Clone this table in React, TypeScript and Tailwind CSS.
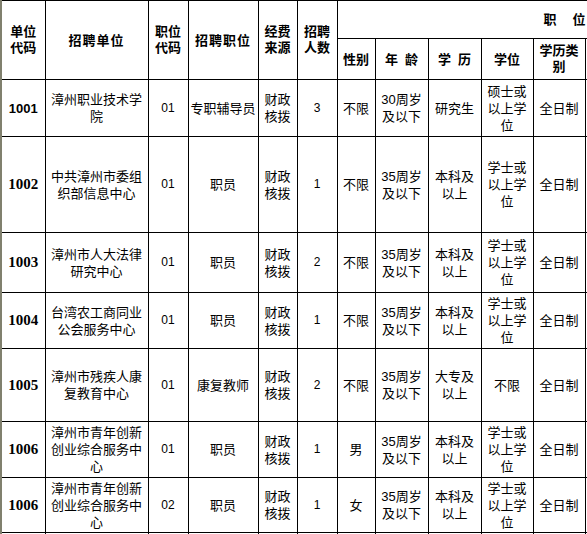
import React from "react";

type Row = {
  code: string;
  unit: string;
  pos: string;
  job: string;
  fund: string;
  num: string;
  sex: string;
  age: string;
  edu: string;
  degree: string;
  kind: string;
  h: string;
  serif: boolean;
};

const rows: Row[] = [
  { code: "1001", unit: "漳州职业技术学院", pos: "01", job: "专职辅导员", fund: "财政核拨", num: "3", sex: "不限", age: "30周岁及以下", edu: "研究生", degree: "硕士或以上学位", kind: "全日制", h: "h-[57px]", serif: false },
  { code: "1002", unit: "中共漳州市委组织部信息中心", pos: "01", job: "职员", fund: "财政核拨", num: "1", sex: "不限", age: "35周岁及以下", edu: "本科及以上", degree: "学士或以上学位", kind: "全日制", h: "h-[96px]", serif: true },
  { code: "1003", unit: "漳州市人大法律研究中心", pos: "01", job: "职员", fund: "财政核拨", num: "2", sex: "不限", age: "35周岁及以下", edu: "本科及以上", degree: "学士或以上学位", kind: "全日制", h: "h-[60px]", serif: true },
  { code: "1004", unit: "台湾农工商同业公会服务中心", pos: "01", job: "职员", fund: "财政核拨", num: "1", sex: "不限", age: "35周岁及以下", edu: "本科及以上", degree: "学士或以上学位", kind: "全日制", h: "h-[56px]", serif: true },
  { code: "1005", unit: "漳州市残疾人康复教育中心", pos: "01", job: "康复教师", fund: "财政核拨", num: "2", sex: "不限", age: "35周岁及以下", edu: "大专及以上", degree: "不限", kind: "全日制", h: "h-[73px]", serif: true },
  { code: "1006", unit: "漳州市青年创新创业综合服务中心", pos: "01", job: "职员", fund: "财政核拨", num: "1", sex: "男", age: "35周岁及以下", edu: "本科及以上", degree: "学士或以上学位", kind: "全日制", h: "h-[56px]", serif: true },
  { code: "1006", unit: "漳州市青年创新创业综合服务中心", pos: "02", job: "职员", fund: "财政核拨", num: "1", sex: "女", age: "35周岁及以下", edu: "本科及以上", degree: "学士或以上学位", kind: "全日制", h: "h-[55px]", serif: true },
];

const td = "border border-black text-center align-middle px-[1px] py-0";
const th = "border border-black text-center align-middle px-[1px] py-0 font-bold";

export default function App() {
  return (
    <div className="w-[587px] h-[534px] overflow-hidden bg-white">
      <div className="border-l-2 border-[#80806e] w-[700px] font-['Liberation_Sans','Noto_Sans_CJK_SC',sans-serif] text-[13px] leading-[17px] text-black">
        <table className="table-fixed border-collapse w-[683px]">
          <colgroup>
            <col className="w-[43px]" />
            <col className="w-[103px]" />
            <col className="w-[40px]" />
            <col className="w-[70px]" />
            <col className="w-[39px]" />
            <col className="w-[40px]" />
            <col className="w-[38px]" />
            <col className="w-[53px]" />
            <col className="w-[53px]" />
            <col className="w-[52px]" />
            <col className="w-[52px]" />
            <col className="w-[100px]" />
          </colgroup>
          <thead>
            <tr className="h-[38px]">
              <th rowSpan={2} className={th + " border-l-0 px-[4px] leading-[16px]"}>单位<br />代码</th>
              <th rowSpan={2} className={th + " tracking-[1px]"}>招聘单位</th>
              <th rowSpan={2} className={th + " px-[3px] leading-[16px]"}>职位<br />代码</th>
              <th rowSpan={2} className={th + " tracking-[1px]"}>招聘职位</th>
              <th rowSpan={2} className={th + " px-[3px] leading-[16px]"}>经费<br />来源</th>
              <th rowSpan={2} className={th + " px-[3px] leading-[16px]"}>招聘<br />人数</th>
              <th colSpan={6} className={th + " text-left pl-[206px] tracking-[16px] whitespace-nowrap"}>职位条件</th>
            </tr>
            <tr className="h-[41px]">
              <th className={th}>性别</th>
              <th className={th}>年&nbsp;&nbsp;龄</th>
              <th className={th}>学&nbsp;&nbsp;历</th>
              <th className={th}>学位</th>
              <th className={th + " px-[2px] leading-[16px]"}>学历类<br />别</th>
              <th className={th}></th>
            </tr>
          </thead>
          <tbody>
            {rows.map((r, i) => (
              <tr key={i} className={r.h}>
                <td
                  className={
                    td +
                    " border-l-0 font-bold " +
                    (r.serif
                      ? "font-['Liberation_Serif',serif] text-[15px]"
                      : "font-['Liberation_Sans',sans-serif] text-[13px]")
                  }
                >
                  {r.code}
                </td>
                <td className={td + " px-[5px]"}>{r.unit}</td>
                <td className={td + " text-[12px]"}>{r.pos}</td>
                <td className={td}>{r.job}</td>
                <td className={td + " px-[3px]"}>{r.fund}</td>
                <td className={td + " text-[12px]"}>{r.num}</td>
                <td className={td}>{r.sex}</td>
                <td className={td + " px-[3px]"}>{r.age}</td>
                <td className={td + " px-[3px]"}>{r.edu}</td>
                <td className={td + " px-[3px]"}>{r.degree}</td>
                <td className={td + " px-[3px]"}>{r.kind}</td>
                <td className={td}></td>
              </tr>
            ))}
            <tr className="h-[40px]">
              <td className={td + " border-l-0"}></td>
              <td className={td}></td>
              <td className={td}></td>
              <td className={td}></td>
              <td className={td}></td>
              <td className={td}></td>
              <td className={td}></td>
              <td className={td}></td>
              <td className={td}></td>
              <td className={td}></td>
              <td className={td}></td>
              <td className={td}></td>
            </tr>
          </tbody>
        </table>
      </div>
    </div>
  );
}
